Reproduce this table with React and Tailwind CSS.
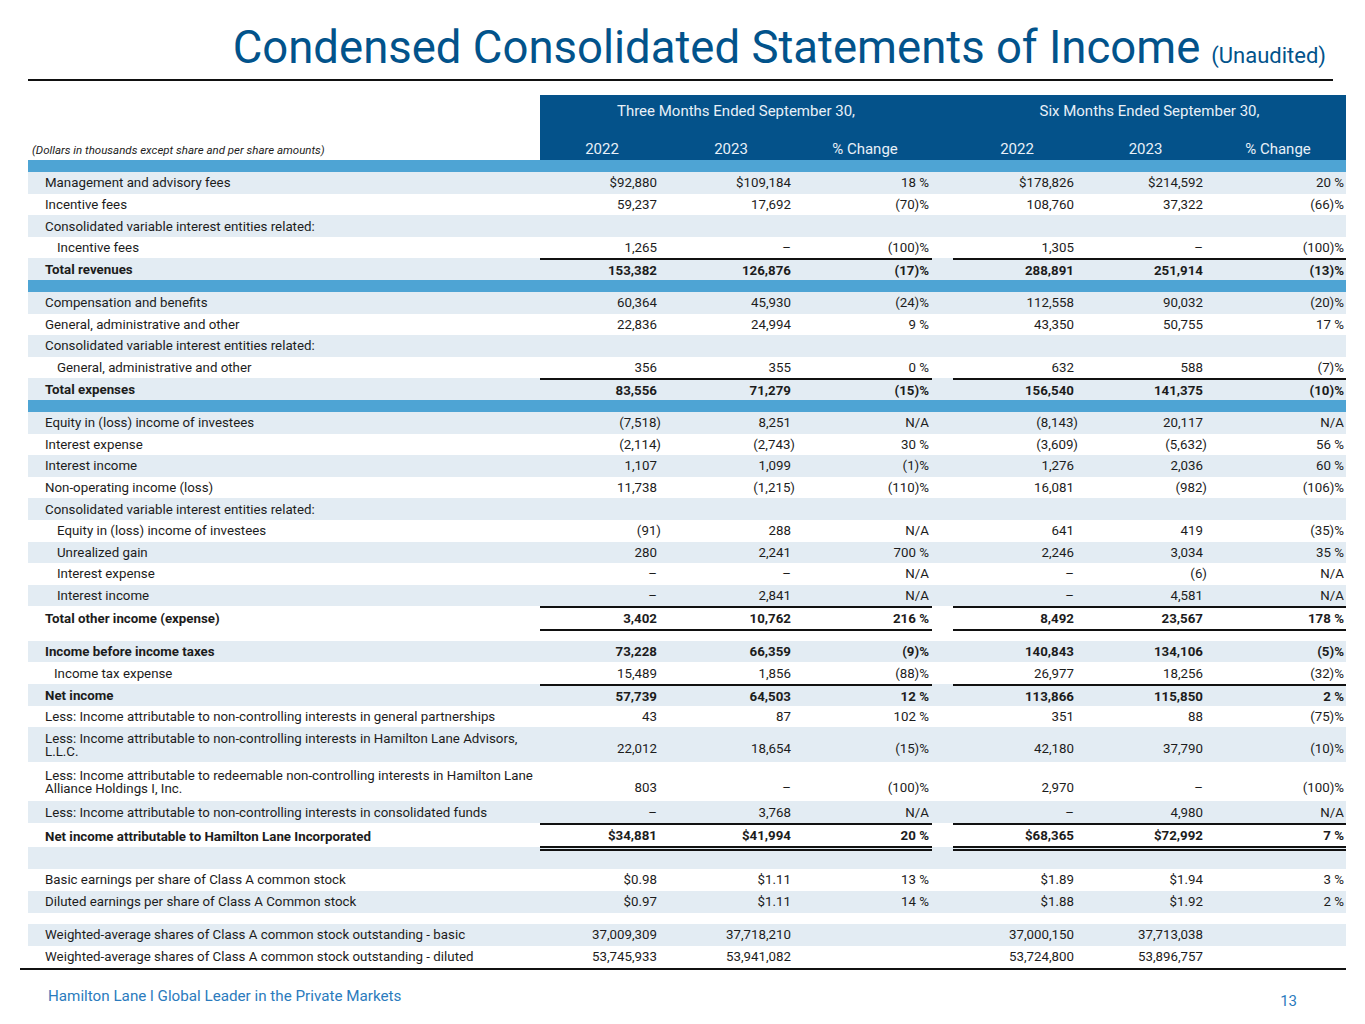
import React from "react";

const cols = "grid grid-cols-[512px_124px_134px_134px_21px_128px_129px_136px]";

const rows = [
  { t: "bar" },
  { l: "Management and advisory fees", s: 1, v: ["$92,880", "$109,184", "18 %", "$178,826", "$214,592", "20 %"] },
  { l: "Incentive fees", v: ["59,237", "17,692", "(70)%", "108,760", "37,322", "(66)%"] },
  { l: "Consolidated variable interest entities related:", s: 1 },
  { l: "Incentive fees", i: 1, v: ["1,265", "–", "(100)%", "1,305", "–", "(100)%"] },
  { l: "Total revenues", s: 1, b: 1, top: 1, v: ["153,382", "126,876", "(17)%", "288,891", "251,914", "(13)%"] },
  { t: "bar" },
  { l: "Compensation and benefits", s: 1, v: ["60,364", "45,930", "(24)%", "112,558", "90,032", "(20)%"] },
  { l: "General, administrative and other", v: ["22,836", "24,994", "9 %", "43,350", "50,755", "17 %"] },
  { l: "Consolidated variable interest entities related:", s: 1 },
  { l: "General, administrative and other", i: 1, v: ["356", "355", "0 %", "632", "588", "(7)%"] },
  { l: "Total expenses", s: 1, b: 1, top: 1, v: ["83,556", "71,279", "(15)%", "156,540", "141,375", "(10)%"] },
  { t: "bar" },
  { l: "Equity in (loss) income of investees", s: 1, v: ["(7,518)", "8,251", "N/A", "(8,143)", "20,117", "N/A"] },
  { l: "Interest expense", v: ["(2,114)", "(2,743)", "30 %", "(3,609)", "(5,632)", "56 %"] },
  { l: "Interest income", s: 1, v: ["1,107", "1,099", "(1)%", "1,276", "2,036", "60 %"] },
  { l: "Non-operating income (loss)", v: ["11,738", "(1,215)", "(110)%", "16,081", "(982)", "(106)%"] },
  { l: "Consolidated variable interest entities related:", s: 1 },
  { l: "Equity in (loss) income of investees", i: 1, v: ["(91)", "288", "N/A", "641", "419", "(35)%"] },
  { l: "Unrealized gain", i: 1, s: 1, v: ["280", "2,241", "700 %", "2,246", "3,034", "35 %"] },
  { l: "Interest expense", i: 1, v: ["–", "–", "N/A", "–", "(6)", "N/A"] },
  { l: "Interest income", i: 1, s: 1, v: ["–", "2,841", "N/A", "–", "4,581", "N/A"] },
  { l: "Total other income (expense)", b: 1, top: 1, bot: 1, v: ["3,402", "10,762", "216 %", "8,492", "23,567", "178 %"] },
  { t: "gap", h: "h-[13px]" },
  { l: "Income before income taxes", s: 1, b: 1, v: ["73,228", "66,359", "(9)%", "140,843", "134,106", "(5)%"] },
  { l: "Income tax expense", i: 2, v: ["15,489", "1,856", "(88)%", "26,977", "18,256", "(32)%"] },
  { l: "Net income", s: 1, b: 1, top: 1, v: ["57,739", "64,503", "12 %", "113,866", "115,850", "2 %"] },
  { l: "Less: Income attributable to non-controlling interests in general partnerships", v: ["43", "87", "102 %", "351", "88", "(75)%"] },
  { l: ["Less: Income attributable to non-controlling interests in Hamilton Lane Advisors,", "L.L.C."], s: 1, h: "h-[35px]", v: ["22,012", "18,654", "(15)%", "42,180", "37,790", "(10)%"] },
  { l: ["Less: Income attributable to redeemable non-controlling interests in Hamilton Lane", "Alliance Holdings I, Inc."], h: "h-[39px]", v: ["803", "–", "(100)%", "2,970", "–", "(100)%"] },
  { l: "Less: Income attributable to non-controlling interests in consolidated funds", s: 1, v: ["–", "3,768", "N/A", "–", "4,980", "N/A"] },
  { l: "Net income attributable to Hamilton Lane Incorporated", b: 1, top: 1, dbl: 1, h: "h-[24px]", v: ["$34,881", "$41,994", "20 %", "$68,365", "$72,992", "7 %"] },
  { l: "", s: 1, h: "h-[22px]" },
  { l: "Basic earnings per share of Class A common stock", h: "h-[22px]", v: ["$0.98", "$1.11", "13 %", "$1.89", "$1.94", "3 %"] },
  { l: "Diluted earnings per share of Class A Common stock", s: 1, h: "h-[22px]", v: ["$0.97", "$1.11", "14 %", "$1.88", "$1.92", "2 %"] },
  { t: "gap", h: "h-[11px]" },
  { l: "Weighted-average shares of Class A common stock outstanding - basic", s: 1, h: "h-[22px]", v: ["37,009,309", "37,718,210", "", "37,000,150", "37,713,038", ""] },
  { l: "Weighted-average shares of Class A common stock outstanding - diluted", h: "h-[22px]", v: ["53,745,933", "53,941,082", "", "53,724,800", "53,896,757", ""] },
];

function Cell({ val, pct, r, last }) {
  let border = "";
  if (r.top) border += " border-t-2 border-[#111]";
  if (r.bot) border += " border-b-2 border-[#111]";
  if (r.dbl) border += " border-b-[5px] border-double border-[#111]";
  const paren = val && val.endsWith(")");
  return (
    <div className={`flex justify-end ${Array.isArray(r.l) ? "items-end pb-[3px]" : "items-center pt-[1px]"} ${pct ? (last ? "pr-[2px]" : "pr-[3px]") : "pr-[7px]"}${border}`}>
      <span className={paren ? "-mr-[4px]" : ""}>{val}</span>
    </div>
  );
}

function Row({ r }) {
  if (r.t === "bar") return <div className="h-[12px] bg-[#4ea4d4]" />;
  if (r.t === "gap") return <div className={r.h} />;
  const v = r.v || ["", "", "", "", "", ""];
  const two = Array.isArray(r.l);
  const pad = r.i === 1 ? "pl-[29px]" : r.i === 2 ? "pl-[26px]" : "pl-[17px]";
  return (
    <div className={`${cols} ${r.h || "h-[21.6px]"} ${r.s ? "bg-[#e3ecf3]" : "bg-white"} ${r.b ? "font-bold" : ""}`}>
      <div className={`flex items-center whitespace-nowrap pt-[1px] ${pad}`}>
        {two ? (
          <div className="leading-[13px]">
            {r.l[0]}
            <br />
            {r.l[1]}
          </div>
        ) : (
          r.l
        )}
      </div>
      <Cell val={v[0]} r={r} />
      <Cell val={v[1]} r={r} />
      <Cell val={v[2]} r={r} pct />
      <div />
      <Cell val={v[3]} r={r} />
      <Cell val={v[4]} r={r} />
      <Cell val={v[5]} r={r} pct last />
    </div>
  );
}

export default function App() {
  return (
    <div className="w-[1365px] h-[1024px] bg-white font-['Roboto',sans-serif] text-[#1c1c1c] overflow-hidden">
      {/* title */}
      <div className="h-[79px] flex justify-end items-end pr-[39px] pb-[6px] text-[#02538b]">
        <h1 className="text-[45.5px] leading-[50px]">Condensed Consolidated Statements of Income</h1>
        <span className="ml-[11px] text-[22px] leading-[34px]">(Unaudited)</span>
      </div>
      <div className="ml-[28px] w-[1305px] h-[2px] bg-[#111]" />

      {/* table */}
      <div className="ml-[28px] mt-[14px] w-[1318px] text-[13.3px]">
        <div className="grid grid-cols-[512px_806px] h-[65px]">
          <div className="flex items-end pb-[1px] pl-[4px] italic text-[11.5px]">
            (Dollars in thousands except share and per share amounts)
          </div>
          <div className="bg-[#04528a] text-[#e8f0f8] text-[15px] grid grid-cols-[124px_134px_134px_21px_128px_129px_136px] grid-rows-[32px_33px]">
            <div className="col-span-3 flex items-center justify-center">Three Months Ended September 30,</div>
            <div />
            <div className="col-span-3 flex items-center justify-center">Six Months Ended September 30,</div>
            <div className="flex items-end justify-center">2022</div>
            <div className="flex items-end justify-center">2023</div>
            <div className="flex items-end justify-center">% Change</div>
            <div />
            <div className="flex items-end justify-center">2022</div>
            <div className="flex items-end justify-center">2023</div>
            <div className="flex items-end justify-center">% Change</div>
          </div>
        </div>
        {rows.map((r, idx) => (
          <Row key={idx} r={r} />
        ))}
      </div>
      <div className="ml-[20px] w-[1326px] h-[2px] bg-[#111]" />

      {/* footer */}
      <div className="flex justify-between items-center mt-[11px] pl-[48px] pr-[68px] text-[#2b7bbd]">
        <span className="text-[15.2px]">Hamilton Lane l Global Leader in the Private Markets</span>
        <span className="text-[15px] mt-[9px]">13</span>
      </div>
    </div>
  );
}
